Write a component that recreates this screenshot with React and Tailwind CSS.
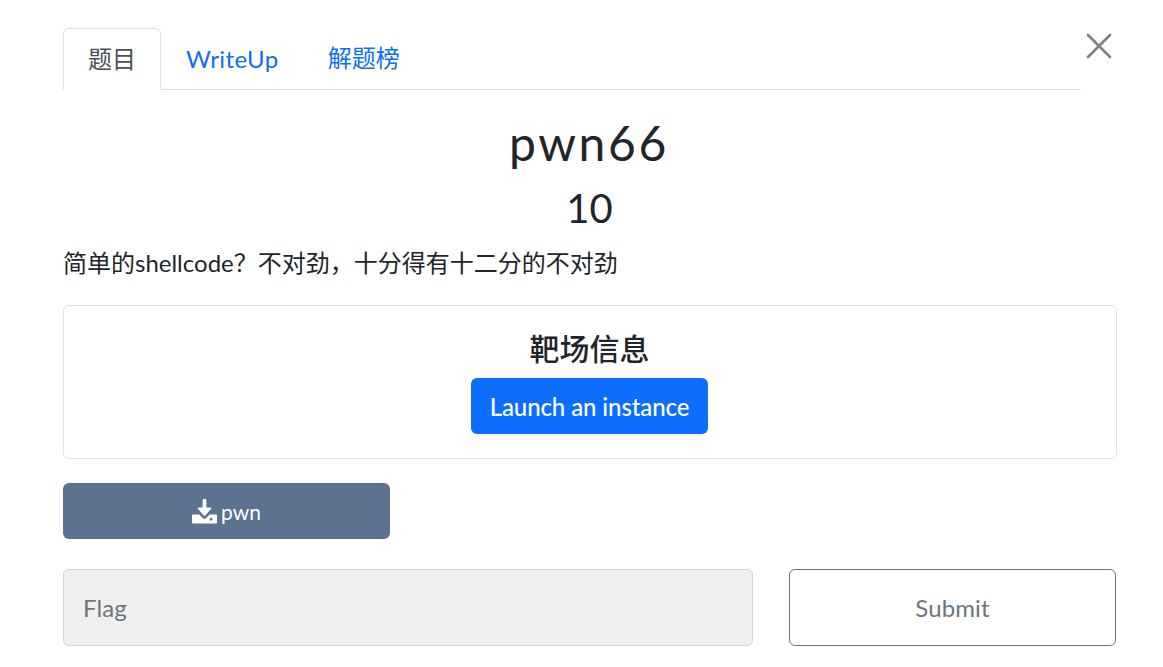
import React from 'react';

const font = { fontFamily: 'Lato, "Noto Sans CJK SC", sans-serif' };

function DownloadIcon() {
  return (
    <svg viewBox="0 0 25 25" className="h-[25px] w-[25px]" fill="#ffffff">
      <path d="M10.6 1.2 Q10.6 0 11.8 0 H13.2 Q14.4 0 14.4 1.2 V8.6 H18.6 Q20 8.6 19.2 9.8 L13.3 16.4 Q12.5 17.2 11.7 16.4 L5.8 9.8 Q5 8.6 6.4 8.6 H10.6 Z" />
      <path fillRule="evenodd" d="M1 15.5 H7.4 L11 19.2 Q12.5 20.6 14 19.2 L17.6 15.5 H24 Q25 15.5 25 16.5 V23.5 Q25 24.5 24 24.5 H1 Q0 24.5 0 23.5 V16.5 Q0 15.5 1 15.5 Z M20.4 20.2 A1.4 1.4 0 1 0 20.4 20.21 Z" />
    </svg>
  );
}

export default function App() {
  return (
    <div style={font} className="relative h-[667px] overflow-hidden bg-white pl-[63px] pr-[46px] pt-[28px] text-[#212529]">
      <div className="mr-[36px] flex h-[62px] border-b border-[#dee2e6] text-[24px]">
        <div className="h-[62px] w-[98px] rounded-t-md border border-b-0 border-[#dee2e6] bg-white pt-[12px] text-center text-[#495057]">题目</div>
        <div className="pl-[25px] pr-[24px] pt-[13px] tracking-[0.4px] text-[#0d6efd]">WriteUp</div>
        <div className="pl-[25px] pt-[12px] text-[#0d6efd]">解题榜</div>
      </div>

      <button className="absolute left-[1086px] top-[33px] h-[26px] w-[26px]">
        <svg viewBox="0 0 26 26" className="h-[26px] w-[26px]" fill="none" stroke="#808080" strokeWidth="2.6" strokeLinecap="round">
          <path d="M2 2 L24 24 M24 2 L2 24" />
        </svg>
      </button>

      <h1 className="mr-[2px] mt-[19px] text-center text-[48px] font-normal leading-[68px] tracking-[2.6px]">pwn66</h1>
      <h2 className="mr-[1px] mt-[7px] text-center text-[40px] font-normal leading-[48px]">10</h2>
      <p className="mt-[14px] text-[24px] leading-[34px]">简单的shellcode？不对劲，十分得有十二分的不对劲</p>

      <div className="mt-[25px] flex h-[154px] flex-col items-center rounded-md border border-[#dee2e6] pt-[22px]">
        <h4 className="mr-[1px] text-[30px] font-medium leading-[40px]">靶场信息</h4>
        <button className="mr-[1px] mt-[10px] h-[56px] w-[237px] rounded-md bg-[#0d6efd] pt-[1px] text-[24px] font-medium tracking-[-0.1px] text-white">Launch an instance</button>
      </div>

      <button className="mt-[24px] flex h-[56px] w-[327px] items-center justify-center gap-[4px] rounded-md bg-[#5c728f] pt-[1px] text-[21px] text-white">
        <DownloadIcon />
        <span>pwn</span>
      </button>

      <div className="mt-[30px] flex">
        <div className="flex h-[77px] w-[690px] items-center rounded-md border border-[#ced4da] bg-[#efefef] pl-[19px] text-[24px] tracking-[0.1px] text-[#6c757d]">Flag</div>
        <button className="ml-[36px] h-[77px] w-[327px] rounded-md border border-[#6c757d] bg-white text-[24px] tracking-[0.1px] text-[#6c757d]">Submit</button>
      </div>
    </div>
  );
}
